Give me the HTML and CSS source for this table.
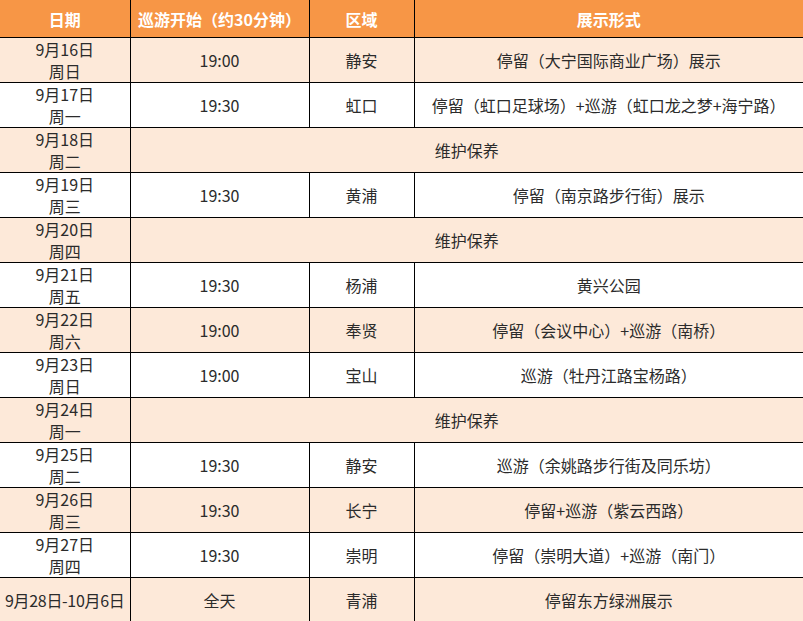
FILE: index.html
```html
<!DOCTYPE html>
<html lang="zh-CN">
<head>
<meta charset="utf-8">
<title>巡游安排</title>
<link rel="stylesheet" href="styles.css">
</head>
<body>
<table class="schedule">
  <colgroup>
    <col class="c-date">
    <col class="c-time">
    <col class="c-area">
    <col class="c-form">
  </colgroup>
  <thead>
    <tr>
      <th>日期</th>
      <th>巡游开始（约30分钟）</th>
      <th>区域</th>
      <th>展示形式</th>
    </tr>
  </thead>
  <tbody>
    <tr class="alt"><td>9月16日<br>周日</td><td>19:00</td><td>静安</td><td>停留（大宁国际商业广场）展示</td></tr>
    <tr><td>9月17日<br>周一</td><td>19:30</td><td>虹口</td><td>停留（虹口足球场）+巡游（虹口龙之梦+海宁路）</td></tr>
    <tr class="alt"><td>9月18日<br>周二</td><td colspan="3">维护保养</td></tr>
    <tr><td>9月19日<br>周三</td><td>19:30</td><td>黄浦</td><td>停留（南京路步行街）展示</td></tr>
    <tr class="alt"><td>9月20日<br>周四</td><td colspan="3">维护保养</td></tr>
    <tr><td>9月21日<br>周五</td><td>19:30</td><td>杨浦</td><td>黄兴公园</td></tr>
    <tr class="alt"><td>9月22日<br>周六</td><td>19:00</td><td>奉贤</td><td>停留（会议中心）+巡游（南桥）</td></tr>
    <tr><td>9月23日<br>周日</td><td>19:00</td><td>宝山</td><td>巡游（牡丹江路宝杨路）</td></tr>
    <tr class="alt"><td>9月24日<br>周一</td><td colspan="3">维护保养</td></tr>
    <tr><td>9月25日<br>周二</td><td>19:30</td><td>静安</td><td>巡游（余姚路步行街及同乐坊）</td></tr>
    <tr class="alt"><td>9月26日<br>周三</td><td>19:30</td><td>长宁</td><td>停留+巡游（紫云西路）</td></tr>
    <tr><td>9月27日<br>周四</td><td>19:30</td><td>崇明</td><td>停留（崇明大道）+巡游（南门）</td></tr>
    <tr class="alt"><td class="nowrap">9月28日-10月6日</td><td>全天</td><td>青浦</td><td>停留东方绿洲展示</td></tr>
  </tbody>
</table>
</body>
</html>
```

FILE: styles.css
```css
html, body {
  margin: 0;
  padding: 0;
  background: #ffffff;
}

.schedule {
  width: 803px;
  border-collapse: collapse;
  table-layout: fixed;
  font-family: "Microsoft YaHei", "Noto Sans CJK SC", "Noto Sans", sans-serif;
  font-size: 16px;
  color: #2b2b2b;
}

.c-date { width: 130px; }
.c-time { width: 179px; }
.c-area { width: 105px; }
.c-form { width: 389px; }

.schedule th,
.schedule td {
  padding: 0;
  text-align: center;
  vertical-align: middle;
  border: 1px solid #000000;
  line-height: 22px;
  white-space: nowrap;
  overflow: hidden;
}

.schedule th:first-child,
.schedule td:first-child {
  border-left: none;
}

.schedule th:last-child,
.schedule td:last-child {
  border-right: none;
}

.schedule th {
  height: 37px;
  border-top: none;
  background: #f79646;
  color: #ffffff;
  font-weight: bold;
}

.schedule tbody tr {
  height: 45px;
}

.schedule tbody tr.alt {
  background: #fde9d9;
}

.schedule tbody tr:last-child td {
  border-bottom: none;
}

.nowrap {
  letter-spacing: -0.3px;
}
```
